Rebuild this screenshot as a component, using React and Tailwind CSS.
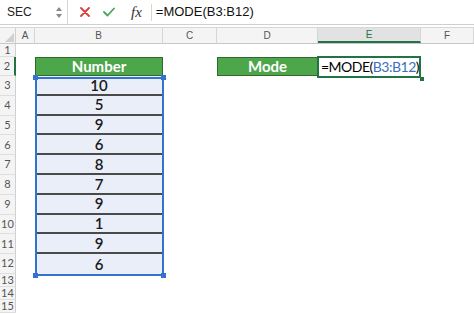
import React from "react";

const COLS = [
  { key: "A", w: "w-[19px]" },
  { key: "B", w: "w-[128px]" },
  { key: "C", w: "w-[54px]" },
  { key: "D", w: "w-[101px]" },
  { key: "E", w: "w-[103px]" },
  { key: "F", w: "w-[53px]" },
];

const data = ["10", "5", "9", "6", "8", "7", "9", "1", "9", "6"];

function RowHeader({ label, h, selected }) {
  return (
    <div
      className={`w-[16px] ${h} shrink-0 flex items-center justify-center text-[11px] text-[#555] bg-[#f4f4f4] border-b border-[#dedede] ${
        selected ? "border-r-2 border-r-[#217346]" : "border-r border-r-[#d0d0d0]"
      }`}
    >
      {label}
    </div>
  );
}

function Empty({ w, h }) {
  return <div className={`${w} ${h} shrink-0`} />;
}

export default function App() {
  return (
    <div className="w-[474px] h-[315px] bg-white overflow-hidden relative font-['Lato','Liberation_Sans',sans-serif] text-black">
      {/* Formula bar */}
      <div className="h-[25px] flex items-center border-b border-[#cfcfcf] bg-white">
        <div className="w-[68px] h-full flex items-center justify-between pl-[7px] pr-[5px] border-r border-[#d6d6d6]">
          <span className="text-[12px] text-[#222] font-['Liberation_Sans',sans-serif]">SEC</span>
          <div className="flex flex-col gap-[3px]">
            <div className="w-0 h-0 border-l-[3px] border-r-[3px] border-b-[4px] border-l-transparent border-r-transparent border-b-[#888]" />
            <div className="w-0 h-0 border-l-[3px] border-r-[3px] border-t-[4px] border-l-transparent border-r-transparent border-t-[#888]" />
          </div>
        </div>
        <div className="flex items-center h-full pl-[12px] gap-[13px]">
          <svg width="10" height="10" viewBox="0 0 10 10">
            <path d="M1 1 L9 9 M9 1 L1 9" stroke="#d9403b" strokeWidth="1.8" strokeLinecap="round" />
          </svg>
          <svg width="12" height="10" viewBox="0 0 12 10">
            <path d="M1 5 L4.5 8.5 L11 1.5" stroke="#4aa55a" strokeWidth="1.8" fill="none" strokeLinecap="round" strokeLinejoin="round" />
          </svg>
          <span className="ml-[3px] italic text-[15px] text-[#333] font-['Liberation_Serif',serif] leading-none">fx</span>
        </div>
        <div className="ml-[9px] h-[17px] border-l border-[#d6d6d6]" />
        <span className="ml-[4px] text-[13px] text-[#111] font-['Liberation_Sans',sans-serif]">=MODE(B3:B12)</span>
      </div>

      {/* gap */}
      <div className="h-[2px] bg-white" />

      {/* Column headers */}
      <div className="flex h-[17px] border-t border-[#d6d6d6] border-b border-b-[#c8c8c8] bg-[#f4f4f4]">
        <div className="w-[16px] shrink-0 border-r border-[#d0d0d0] relative">
          <svg className="absolute right-[1px] bottom-[1px]" width="9" height="9" viewBox="0 0 9 9">
            <path d="M9 0 L9 9 L0 9 Z" fill="#d0d0d0" />
          </svg>
        </div>
        {COLS.map((c) => (
          <div
            key={c.key}
            className={`${c.w} shrink-0 flex items-center justify-center text-[10px] border-r border-[#d6d6d6] font-['Liberation_Sans',sans-serif] ${
              c.key === "E" ? "bg-[#e2e2e2] text-[#217346] border-b-2 border-b-[#217346]" : "text-[#555]"
            }`}
          >
            {c.key}
          </div>
        ))}
      </div>

      {/* Row 1 */}
      <div className="flex">
        <RowHeader label="1" h="h-[13px]" />
      </div>

      {/* Row 2 */}
      <div className="flex">
        <RowHeader label="2" h="h-[19px]" selected />
        <Empty w="w-[19px]" h="h-[19px]" />
        <div className="w-[128px] h-[19px] shrink-0 bg-[#4ea64b] border border-[#2f6a2c] flex items-center justify-center text-white font-bold text-[15px]">
          Number
        </div>
        <Empty w="w-[54px]" h="h-[19px]" />
        <div className="w-[101px] h-[19px] shrink-0 bg-[#4ea64b] border border-[#2f6a2c] flex items-center justify-center text-white font-bold text-[15px]">
          Mode
        </div>
        <div className="w-[103px] h-[19px] shrink-0 relative">
          <div className="absolute -top-[1px] -left-[1px] w-[104px] h-[22px] bg-white border-2 border-[#217346] flex items-center pl-[2px] text-[14px] tracking-[-0.5px] leading-none z-10">
            <span>=MODE(</span>
            <span className="text-[#3b6fc4]">B3:B12</span>
            <span>)</span>
            <span className="ml-[1px] w-[1px] h-[15px] bg-black" />
          </div>
          <div className="absolute right-[-3px] bottom-[-5px] w-[4px] h-[4px] bg-[#217346] z-20" />
        </div>
      </div>

      {/* Data rows 3-12 */}
      {data.map((v, i) => (
        <div className="flex" key={i}>
          <RowHeader label={String(i + 3)} h="h-[19.8px]" />
          <Empty w="w-[19px]" h="h-[19.8px]" />
          <div
            className={`w-[128px] h-[19.8px] shrink-0 bg-[#e9eef8] flex items-center justify-center text-[15px] font-semibold text-[#1a1a1a] ${
              i < 9 ? "border-b-2 border-[#4a4a4a]" : ""
            }`}
          >
            {v}
          </div>
        </div>
      ))}

      {/* Rows 13-15 */}
      {["13", "14", "15"].map((r) => (
        <div className="flex" key={r}>
          <RowHeader label={r} h="h-[13px]" />
        </div>
      ))}

      {/* Selection overlay B3:B12 */}
      <div className="absolute left-[35px] top-[77px] w-[129px] h-[199px] border-2 border-[#3572d0] pointer-events-none" />
      <div className="absolute left-[33px] top-[75px] w-[5px] h-[5px] bg-[#3572d0]" />
      <div className="absolute left-[161px] top-[75px] w-[5px] h-[5px] bg-[#3572d0]" />
      <div className="absolute left-[33px] top-[273px] w-[5px] h-[5px] bg-[#3572d0]" />
      <div className="absolute left-[161px] top-[273px] w-[5px] h-[5px] bg-[#3572d0]" />
    </div>
  );
}
